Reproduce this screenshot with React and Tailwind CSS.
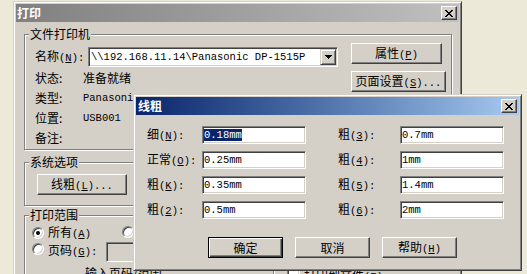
import React from 'react';

const mono = "font-['Liberation_Mono',monospace] text-[10.5px]";

function M({ c, k, t = '' }) {
  return (
    <span className="whitespace-nowrap">
      {c}
      <span className={mono}>
        (<u className="underline-offset-1">{k}</u>){t}
      </span>
    </span>
  );
}

function Btn({ w, children, def }) {
  if (def) {
    return (
      <div className={`${w} h-[21px] border border-black flex items-center justify-center shadow-[inset_1px_1px_0_#fff,inset_-1px_-1px_0_#404040,inset_-2px_-2px_0_#808080]`}>
        {children}
      </div>
    );
  }
  return (
    <div className={`${w} h-[21px] border border-t-white border-l-white border-r-[#404040] border-b-[#404040] shadow-[inset_-1px_-1px_0_#808080] flex items-center justify-center`}>
      {children}
    </div>
  );
}

function XGlyph() {
  const rows = [
    [0, 6], [1, 5], [2, 4], [3, 3], [2, 4], [1, 5], [0, 6],
  ];
  return (
    <svg width="8" height="7" viewBox="0 0 8 7" shapeRendering="crispEdges">
      {rows.map(([a, b], i) => (
        <g key={i}>
          <rect x={a} y={i} width="2" height="1" fill="#000" />
          <rect x={b} y={i} width="2" height="1" fill="#000" />
        </g>
      ))}
    </svg>
  );
}

function CloseBtn() {
  return (
    <div className="w-[16px] h-[14px] bg-[#d4d0c8] border border-t-white border-l-white border-r-[#404040] border-b-[#404040] shadow-[inset_-1px_-1px_0_#808080] flex items-center justify-center">
      <XGlyph />
    </div>
  );
}

function Group({ label, className, children }) {
  return (
    <div className={`relative border border-[#808080] shadow-[inset_1px_1px_0_#fff,1px_1px_0_#fff] ${className}`}>
      <span className="absolute -top-[8px] left-[4px] px-[1px] bg-[#d4d0c8] leading-[14px] whitespace-nowrap">{label}</span>
      {children}
    </div>
  );
}

const sunken = 'border border-t-[#808080] border-l-[#808080] border-r-white border-b-white shadow-[inset_1px_1px_0_#404040,inset_-1px_-1px_0_#d4d0c8]';

function Radio({ on }) {
  return (
    <div className="w-[12px] h-[12px] shrink-0 rounded-full border border-t-[#808080] border-l-[#808080] border-r-white border-b-white bg-white shadow-[inset_1px_1px_0_#404040,inset_-1px_-1px_0_#d4d0c8] flex items-center justify-center">
      {on && <div className="w-[4px] h-[4px] rounded-full bg-black" />}
    </div>
  );
}

function Field({ value, selected }) {
  return (
    <div className={`w-[104px] h-[18px] bg-white ${sunken} flex items-center pl-[1px]`}>
      <span className={`${mono} leading-[12px] ${selected ? 'bg-[#0a246a] text-white' : ''}`}>{value}</span>
    </div>
  );
}

export default function App() {
  const rows = [
    [<M c="细" k="N" t=":" />, '0.18mm', <M c="粗" k="3" t=":" />, '0.7mm'],
    [<M c="正常" k="O" t=":" />, '0.25mm', <M c="粗" k="4" t=":" />, '1mm'],
    [<M c="粗" k="K" t=":" />, '0.35mm', <M c="粗" k="5" t=":" />, '1.4mm'],
    [<M c="粗" k="2" t=":" />, '0.5mm', <M c="粗" k="6" t=":" />, '2mm'],
  ];
  return (
    <div className="relative w-[527px] h-[274px] overflow-hidden bg-[#ece9d8] font-['Noto_Sans_CJK_SC',sans-serif] text-[12px] leading-[14px] text-black pl-[13px] pt-[1px]">
      {/* main print window */}
      <div className="w-[449px] h-[300px] bg-[#d4d0c8] border border-t-[#d4d0c8] border-l-[#d4d0c8] border-r-[#404040] border-b-[#404040] shadow-[inset_1px_1px_0_#fff,inset_-1px_-1px_0_#808080] p-[2px]">
        <div className="h-[18px] bg-linear-to-r from-[#808080] to-[#c0c0c0] flex items-center justify-between pl-[1px] pr-[2px]">
          <span className="text-white font-bold">打印</span>
          <CloseBtn />
        </div>

        <Group label="文件打印机" className="ml-[8px] mt-[12px] w-[428px] h-[116px]">
          <div className="flex pl-[10px]">
            <div className="w-[303px] mt-[12px]">
              <div className="flex items-center h-[20px]">
                <span className="w-[53px]"><M c="名称" k="N" t=":" /></span>
                <div className={`w-[250px] h-[20px] bg-white ${sunken} flex items-center justify-between pl-[2px] pr-[1px]`}>
                  <span className="font-['Liberation_Mono',monospace] text-[10.5px] whitespace-nowrap">\\192.168.11.14\Panasonic DP-1515P</span>
                  <div className="w-[16px] h-[16px] bg-[#d4d0c8] border border-t-[#d4d0c8] border-l-[#d4d0c8] border-r-[#404040] border-b-[#404040] shadow-[inset_1px_1px_0_#fff,inset_-1px_-1px_0_#808080] flex items-center justify-center">
                    <svg width="7" height="4" viewBox="0 0 7 4" shapeRendering="crispEdges">
                      <rect x="0" y="0" width="7" height="1" fill="#000" />
                      <rect x="1" y="1" width="5" height="1" fill="#000" />
                      <rect x="2" y="2" width="3" height="1" fill="#000" />
                      <rect x="3" y="3" width="1" height="1" fill="#000" />
                    </svg>
                  </div>
                </div>
              </div>
              <div className="mt-[1px]">
                <div className="flex items-center h-[20px]"><span className="w-[48px]">状态:</span><span>准备就绪</span></div>
                <div className="flex items-center h-[20px]"><span className="w-[48px]">类型:</span><span className="font-['Liberation_Mono',monospace] text-[10.5px] whitespace-nowrap">Panasonic DP-1515P</span></div>
                <div className="flex items-center h-[20px]"><span className="w-[48px]">位置:</span><span className="font-['Liberation_Mono',monospace] text-[10.5px]">USB001</span></div>
                <div className="flex items-center h-[20px]"><span className="w-[48px]">备注:</span></div>
              </div>
            </div>
            <div className="ml-[13px] mt-[8px] flex flex-col gap-[7px]">
              <Btn w="w-[91px]"><M c="属性" k="P" /></Btn>
              <Btn w="w-[95px]"><M c="页面设置" k="S" t="..." /></Btn>
            </div>
          </div>
        </Group>

        <Group label="系统选项" className="ml-[8px] mt-[12px] w-[428px] h-[44px]">
          <div className="pl-[12px] pt-[11px]">
            <Btn w="w-[90px]"><M c="线粗" k="L" t="..." /></Btn>
          </div>
        </Group>

        <div className="flex">
          <Group label="打印范围" className="ml-[8px] mt-[9px] w-[250px] h-[80px]">
            <div className="pl-[7px] pt-[11px]">
              <div className="flex items-center h-[12px]">
                <div className="flex items-center w-[90px]">
                  <Radio on />
                  <span className="ml-[4px]"><M c="所有" k="A" /></span>
                </div>
                <div className="flex items-center -mt-[3px]">
                  <Radio />
                  <span className="ml-[4px]"><M c="当前页" k="E" /></span>
                </div>
              </div>
              <div className="flex items-start mt-[3px]">
                <div className="mt-[1px]"><Radio /></div>
                <span className="ml-[4px] w-[58px] mt-[1px]"><M c="页码" k="G" t=":" /></span>
                <div className={`w-[80px] h-[20px] ${sunken}`} />
              </div>
              <div className="pl-[53px] mt-[4px]">输入页码/范围</div>
            </div>
          </Group>
          <div className="ml-[13px] mt-[62px] flex items-start">
            <div className={`w-[13px] h-[13px] bg-white ${sunken}`} />
            <span className="ml-[4px]"><M c="打印到文件" k="F" /></span>
          </div>
        </div>
      </div>

      {/* line width dialog */}
      <div className="absolute left-[133px] top-[94px] w-[389px] h-[177px] bg-[#d4d0c8] border border-t-[#d4d0c8] border-l-[#d4d0c8] border-r-[#404040] border-b-[#404040] shadow-[inset_1px_1px_0_#fff,inset_-1px_-1px_0_#808080] p-[2px] flex flex-col">
        <div className="h-[18px] bg-linear-to-r from-[#0a246a] to-[#a6caf0] flex items-center justify-between pl-[2px] pr-[2px]">
          <span className="text-white font-bold">线粗</span>
          <CloseBtn />
        </div>
        <div className="pl-[11px] pt-[11px] grid grid-cols-[55px_104px_62px_104px] gap-y-[7px]">
          {rows.map((r, i) => (
            <React.Fragment key={i}>
              <div className="h-[18px] flex items-center">{r[0]}</div>
              <Field value={r[1]} selected={i === 0} />
              <div className="h-[18px] flex items-center ml-[32px]">{r[2]}</div>
              <div className="ml-[32px]"><Field value={r[3]} /></div>
            </React.Fragment>
          ))}
        </div>
        <div className="flex pl-[72px] mt-[18px] gap-[12px]">
          <Btn w="w-[75px]" def>确定</Btn>
          <Btn w="w-[75px]">取消</Btn>
          <Btn w="w-[75px]"><M c="帮助" k="H" /></Btn>
        </div>
      </div>
    </div>
  );
}
